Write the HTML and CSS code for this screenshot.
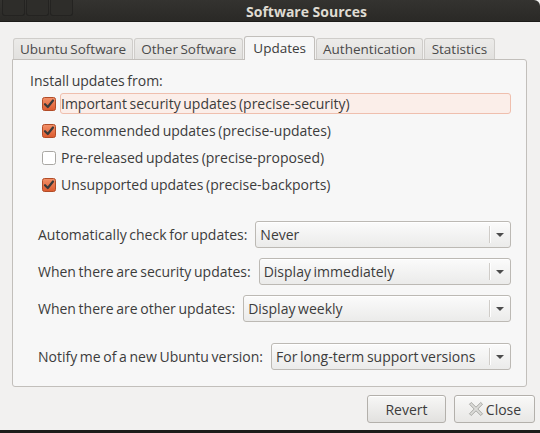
FILE: index.html
```html
<!DOCTYPE html>
<html>
<head>
<meta charset="utf-8">
<link rel="stylesheet" href="styles.css">
</head>
<body>
<div class="window">
  <div class="titlebar">
    <div class="wm-buttons"><span class="wm-btn"></span><span class="wm-btn"></span><span class="wm-btn"></span></div>
    <div class="title">Software Sources</div>
  </div>
  <div class="content">
    <div class="tabs">
      <div class="tab">Ubuntu Software</div>
      <div class="tab">Other Software</div>
      <div class="tab active">Updates</div>
      <div class="tab">Authentication</div>
      <div class="tab stats">Statistics</div>
    </div>
    <div class="panel">
      <div class="section-title">Install updates from:</div>
      <div class="checks">
        <div class="check-row focused">
          <svg class="cb" viewBox="0 0 14 14"><defs><linearGradient id="og" x1="0" y1="0" x2="0" y2="1"><stop offset="0" stop-color="#f3926a"/><stop offset="1" stop-color="#dc5a2e"/></linearGradient></defs><rect x="0.5" y="0.5" width="13" height="13" rx="2" fill="url(#og)" stroke="#b14c27"/><path d="M3 7.2 L5.8 10 L11 3.5" fill="none" stroke="#3a3a3a" stroke-width="2.2" stroke-linecap="round" stroke-linejoin="round"/></svg>
          <span class="check-label">Important security updates (precise-security)</span>
        </div>
        <div class="check-row">
          <svg class="cb" viewBox="0 0 14 14"><rect x="0.5" y="0.5" width="13" height="13" rx="2" fill="url(#og)" stroke="#b14c27"/><path d="M3 7.2 L5.8 10 L11 3.5" fill="none" stroke="#3a3a3a" stroke-width="2.2" stroke-linecap="round" stroke-linejoin="round"/></svg>
          <span class="check-label">Recommended updates (precise-updates)</span>
        </div>
        <div class="check-row">
          <svg class="cb" viewBox="0 0 14 14"><rect x="0.5" y="0.5" width="13" height="13" rx="2" fill="#ffffff" stroke="#a9a7a3"/></svg>
          <span class="check-label">Pre-released updates (precise-proposed)</span>
        </div>
        <div class="check-row">
          <svg class="cb" viewBox="0 0 14 14"><rect x="0.5" y="0.5" width="13" height="13" rx="2" fill="url(#og)" stroke="#b14c27"/><path d="M3 7.2 L5.8 10 L11 3.5" fill="none" stroke="#3a3a3a" stroke-width="2.2" stroke-linecap="round" stroke-linejoin="round"/></svg>
          <span class="check-label">Unsupported updates (precise-backports)</span>
        </div>
      </div>

      <div class="combos">
        <div class="combo-row">
          <span class="combo-label">Automatically check for updates:</span>
          <div class="combo"><span class="combo-value">Never</span><span class="combo-sep"></span><span class="combo-arrow"></span></div>
        </div>
        <div class="combo-row">
          <span class="combo-label">When there are security updates:</span>
          <div class="combo"><span class="combo-value">Display immediately</span><span class="combo-sep"></span><span class="combo-arrow"></span></div>
        </div>
        <div class="combo-row">
          <span class="combo-label">When there are other updates:</span>
          <div class="combo"><span class="combo-value">Display weekly</span><span class="combo-sep"></span><span class="combo-arrow"></span></div>
        </div>
        <div class="combo-row notify">
          <span class="combo-label">Notify me of a new Ubuntu version:</span>
          <div class="combo"><span class="combo-value">For long-term support versions</span><span class="combo-sep"></span><span class="combo-arrow"></span></div>
        </div>
      </div>
    </div>
    <div class="actions">
      <button class="btn revert">Revert</button>
      <button class="btn close">
        <svg class="close-icon" viewBox="0 0 16 16"><path d="M3.2 1.5 L8 6.2 L12.8 1.5 L14.5 3.2 L9.8 8 L14.5 12.8 L12.8 14.5 L8 9.8 L3.2 14.5 L1.5 12.8 L6.2 8 L1.5 3.2 Z" fill="#dcdcd9" stroke="#a8a8a4" stroke-width="1" stroke-linejoin="round"/></svg>
        <span>Close</span>
      </button>
    </div>
  </div>
  <div class="bottom-strip"></div>
</div>
</body>
</html>
```

FILE: styles.css
```css
* { box-sizing: border-box; }
html, body { margin: 0; padding: 0; }
body {
  width: 540px;
  height: 433px;
  overflow: hidden;
  background: #f2f1f0;
  font-family: "Open Sans", "DejaVu Sans", sans-serif;
  font-size: 14px;
  word-spacing: -1px;
  color: #3c3c3c;
}
.window {
  width: 540px;
  height: 433px;
  display: flex;
  flex-direction: column;
  background: #f2f1f0;
}
.titlebar {
  height: 22px;
  flex: none;
  background: linear-gradient(#343330, #2a2926);
  border-top-right-radius: 6px;
  border-bottom: 1px solid #1c1b19;
  display: flex;
  align-items: flex-start;
}
.wm-buttons {
  display: flex;
  gap: 1px;
  padding-left: 2px;
}
.wm-btn {
  width: 23px;
  height: 16px;
  background: #2e2d2a;
  border: 1px solid #242321;
  border-top: none;
  border-radius: 0 0 3px 3px;
}
.title {
  flex: 1;
  text-align: center;
  font-weight: bold;
  font-size: 14px;
  word-spacing: 0;
  line-height: 23px;
  color: #dfdbd2;
}
.content {
  flex: 1;
  padding: 14px 13px 0 12px;
  display: flex;
  flex-direction: column;
}
.tabs {
  display: flex;
  align-items: flex-end;
  gap: 1px;
  padding-left: 1px;
  height: 23px;
  position: relative;
  z-index: 1;
  font-size: 13.5px;
}
.tab {
  height: 21px;
  padding: 0 6px;
  line-height: 20px;
  background: linear-gradient(#ecebe9, #e2e1df);
  border: 1px solid #cfcdca;
  border-bottom: none;
  border-radius: 3px 3px 0 0;
  color: #4a4a4a;
  white-space: nowrap;
}
.tab.active {
  background: #f7f7f7;
  border-color: #c2bfbb;
  color: #3c3c3c;
  margin-bottom: -1px;
  height: 24px;
  line-height: 22px;
  padding: 0 8px;
}
.tab.stats {
  padding: 0 7px;
}
.panel {
  height: 328px;
  background: #f7f7f7;
  border: 1px solid #c2bfbb;
  border-radius: 0 3px 3px 3px;
  padding: 10px 15px 0 17px;
}
.section-title {
  height: 22px;
  line-height: 22px;
}
.checks {
  display: flex;
  flex-direction: column;
  gap: 6px;
  margin-top: 1px;
  padding-left: 12px;
}
.check-row {
  display: flex;
  align-items: center;
  height: 21px;
}
.cb {
  width: 14px;
  height: 14px;
  flex: none;
  margin-right: 4px;
}
.check-label {
  flex: 1;
  height: 21px;
  line-height: 19px;
  padding-left: 0;
  border: 1px solid transparent;
  border-radius: 3px;
  white-space: nowrap;
}
.check-row.focused .check-label {
  background: #fbeee9;
  border-color: #efbfae;
}
.combos {
  display: flex;
  flex-direction: column;
  gap: 10px;
  margin-top: 26px;
  padding-left: 8px;
}
.combo-row {
  display: flex;
  align-items: center;
  gap: 8px;
}
.combo-row.notify {
  margin-top: 11px;
}
.combo-label {
  white-space: nowrap;
}
.combo {
  flex: 1;
  height: 27px;
  display: flex;
  align-items: center;
  background: linear-gradient(#fbfbfb, #ebebea);
  border: 1px solid #bcb9b4;
  border-radius: 3px;
  box-shadow: inset 0 1px 0 #ffffff;
  padding-left: 4px;
}
.combo-value {
  flex: 1;
  white-space: nowrap;
}
.combo-sep {
  width: 1px;
  height: 17px;
  background: #cfccc8;
  box-shadow: 1px 0 0 #ffffff;
}
.combo-arrow {
  width: 0;
  height: 0;
  margin: 1px 6px 0 6px;
  border-left: 4px solid transparent;
  border-right: 4px solid transparent;
  border-top: 4px solid #4c4c4c;
}
.actions {
  display: flex;
  justify-content: flex-end;
  gap: 8px;
  margin-top: 8px;
  margin-right: -8px;
}
.btn {
  height: 28px;
  font-family: inherit;
  font-size: 14px;
  color: #3c3c3c;
  background: linear-gradient(#f7f7f6, #e2e1df);
  border: 1px solid #b3b0ab;
  border-radius: 3px;
  box-shadow: inset 0 1px 0 #ffffff;
  display: flex;
  align-items: center;
  justify-content: center;
  padding: 0;
}
.btn.revert { width: 79px; }
.btn.close {
  width: 81px;
  gap: 2px;
  background: linear-gradient(#f9f9f8, #e8e7e5);
}
.close-icon {
  width: 16px;
  height: 16px;
}
.bottom-strip {
  height: 3px;
  flex: none;
  background: #1d1c1a;
}
```
